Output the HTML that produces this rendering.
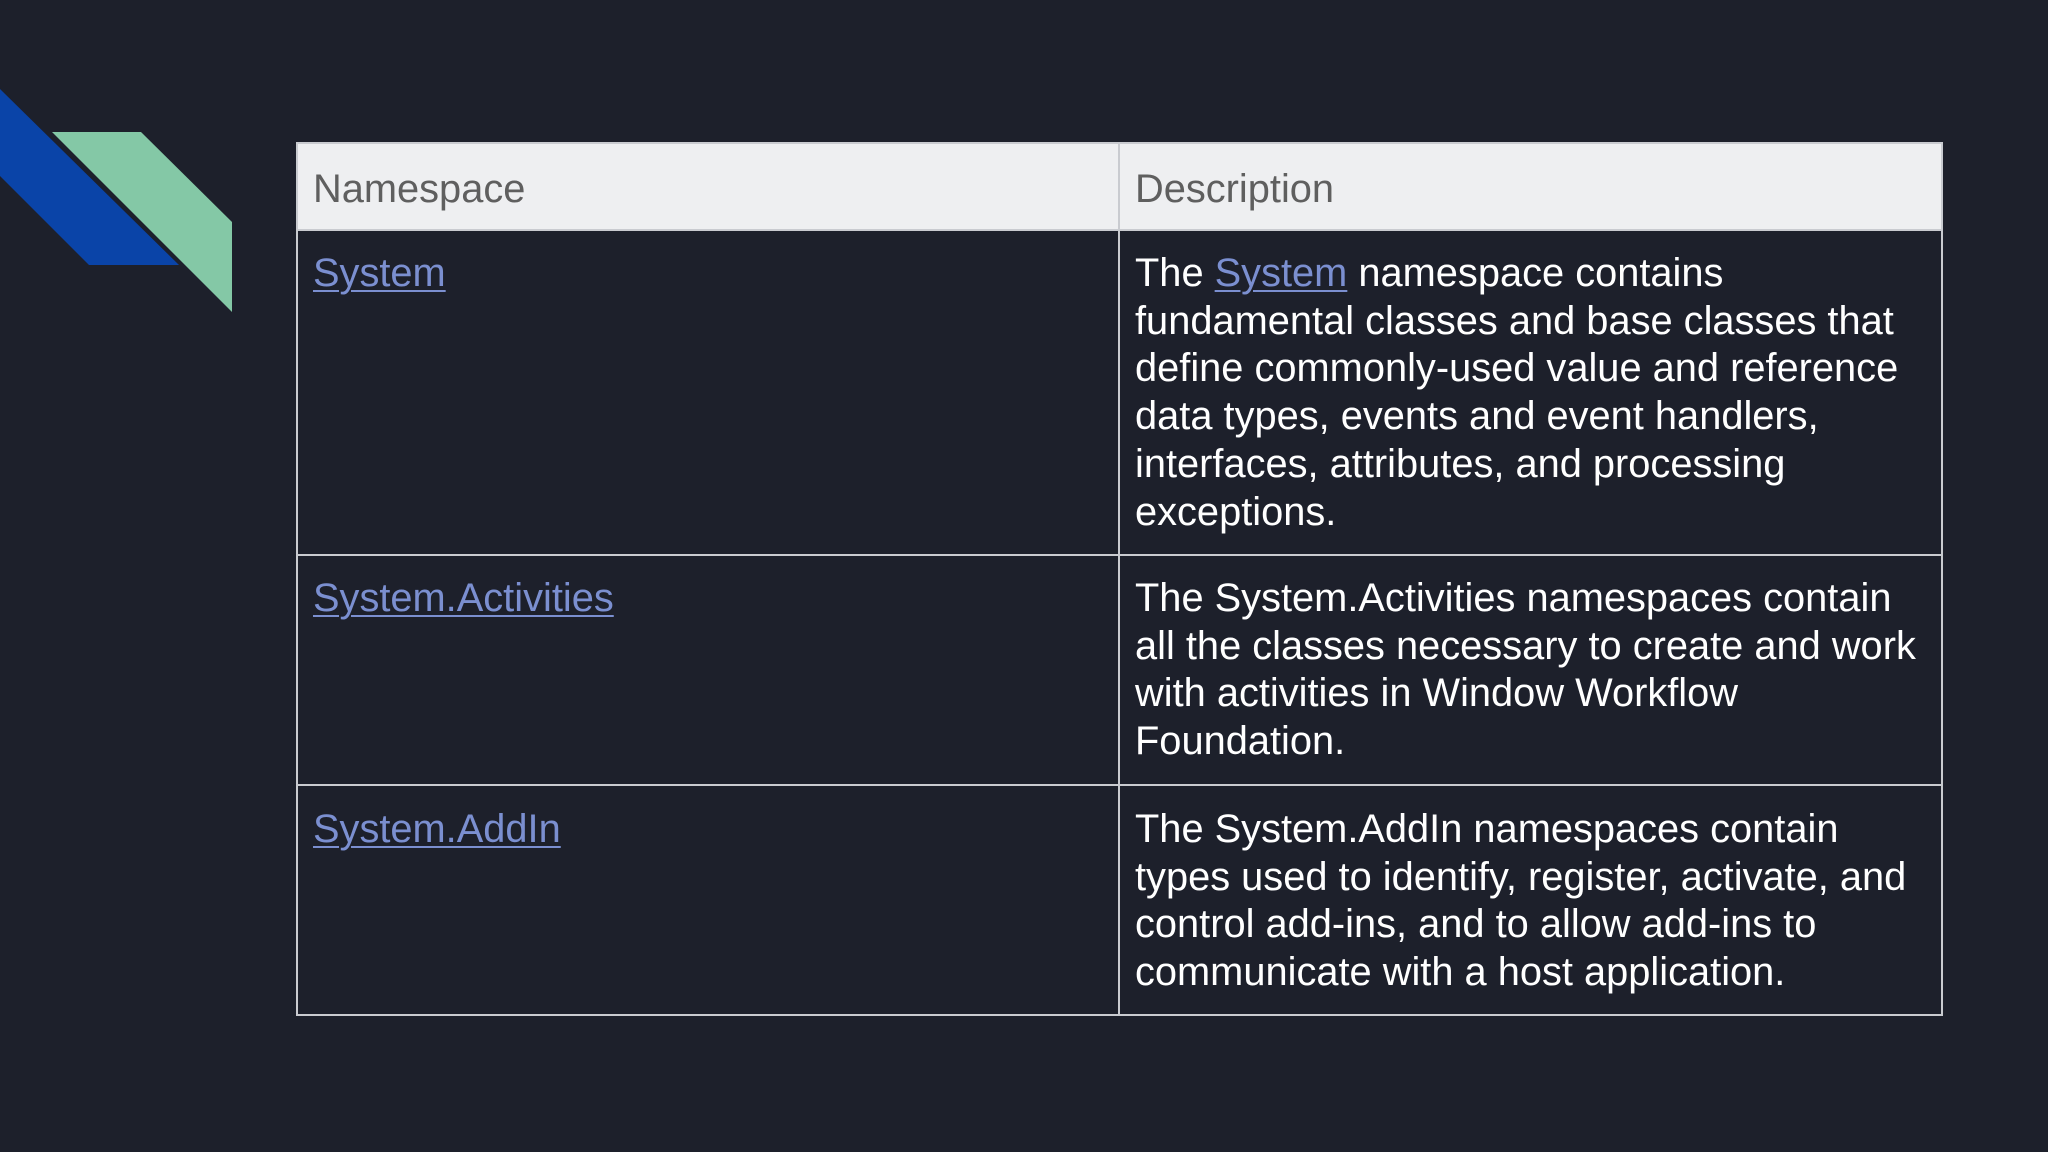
<!DOCTYPE html>
<html><head><style>
html,body{margin:0;padding:0}
body{width:2048px;height:1152px;background:#1d202b;position:relative;overflow:hidden;font-family:"Liberation Sans",Arial,sans-serif}
.t{position:absolute;font-size:39.8px;line-height:47.7px;color:#fff;white-space:pre}
.h{color:#5f5f5f}
a{color:#7b8fd0;text-decoration:underline;text-decoration-thickness:2px;text-underline-offset:4px}
.line{position:absolute;background:#c9cbd0}
</style></head><body>
<svg width="2048" height="1152" style="position:absolute;left:0;top:0">
<polygon points="0,89 179,265 89,265 0,176" fill="#0a44a8"/>
<polygon points="52,132 141,132 232,222 232,312" fill="#84c8a6"/>
<rect x="296" y="142" width="1646" height="88" fill="#eeeff1"/>
</svg>
<div class="line" style="left:296px;top:142px;width:1646px;height:2px"></div>
<div class="line" style="left:296px;top:229px;width:1646px;height:2px"></div>
<div class="line" style="left:296px;top:554px;width:1646px;height:2px"></div>
<div class="line" style="left:296px;top:784px;width:1646px;height:2px"></div>
<div class="line" style="left:296px;top:1014px;width:1646px;height:2px"></div>
<div class="line" style="left:296px;top:142px;width:2px;height:874px"></div>
<div class="line" style="left:1118px;top:142px;width:2px;height:874px"></div>
<div class="line" style="left:1941px;top:142px;width:2px;height:874px"></div>
<div class="t h" style="left:313px;top:166px">Namespace</div>
<div class="t h" style="left:1135px;top:166px">Description</div>
<div class="t" style="left:313px;top:250px"><a>System</a></div>
<div class="t" style="left:1135px;top:250px">The <a>System</a> namespace contains
fundamental classes and base classes that
define commonly-used value and reference
data types, events and event handlers,
interfaces, attributes, and processing
exceptions.</div>
<div class="t" style="left:313px;top:575px"><a>System.Activities</a></div>
<div class="t" style="left:1135px;top:575px">The System.Activities namespaces contain
all the classes necessary to create and work
with activities in Window Workflow
Foundation.</div>
<div class="t" style="left:313px;top:806px"><a>System.AddIn</a></div>
<div class="t" style="left:1135px;top:806px">The System.AddIn namespaces contain
types used to identify, register, activate, and
control add-ins, and to allow add-ins to
communicate with a host application.</div>
</body></html>
